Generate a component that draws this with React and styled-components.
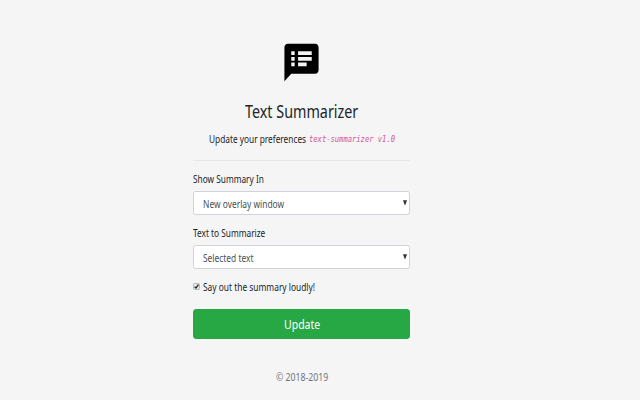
import styled, { createGlobalStyle } from 'styled-components';

const GlobalStyle = createGlobalStyle`
  * {
    box-sizing: border-box;
  }

  body {
    margin: 0;
    background-color: #f5f5f5;
    color: #212529;
    font-family: 'Noto Sans', 'Open Sans', sans-serif;
    font-size: 10px;
  }
`;

const Page = styled.div`
  display: flex;
  justify-content: center;
  height: 400px;
  padding-top: 39.5px;
  padding-right: 36.5px;
  overflow: hidden;
`;

const Form = styled.form`
  display: flex;
  flex-direction: column;
  width: 217px;
`;

/* condensed text, keeps the given width in the layout */
const Text = styled.span`
  display: block;
  flex: none;
  width: ${(props) => props.$width}px;
  white-space: nowrap;
  transform: scaleX(${(props) => props.$scale});
  transform-origin: left;
`;

const Logo = styled.svg`
  display: block;
  width: 41px;
  height: 45px;
  margin: 0 auto;
  fill: #000;
`;

const Title = styled.h1`
  display: flex;
  justify-content: center;
  height: 24px;
  margin: 14.5px 0 0;
  font-size: 18px;
  font-weight: 400;
  line-height: 24px;
`;

const Intro = styled.p`
  display: flex;
  justify-content: center;
  gap: 3px;
  height: 16px;
  margin: 8px 0 0;
  line-height: 16px;
`;

const Code = styled(Text)`
  color: #d8539a;
  font-family: 'DejaVu Sans Mono', monospace;
  font-size: 8px;
  font-style: italic;
  line-height: 17px;
`;

const Divider = styled.hr`
  width: 100%;
  height: 1px;
  margin: 13px 0 10px;
  border: 0;
  background-color: #e6e6e6;
`;

const Label = styled.label`
  height: 16px;
  margin-bottom: 4px;
  line-height: 16px;
`;

const Select = styled.div`
  display: flex;
  align-items: center;
  justify-content: space-between;
  height: 24px;
  margin-bottom: 10px;
  padding: 1px 2px 0 9px;
  border: 1px solid #ced4da;
  border-radius: 2.5px;
  background-color: #fff;
  color: #495057;
`;

const Arrow = styled.svg`
  width: 4px;
  height: 5px;
  margin-bottom: 2px;
  fill: #333;
`;

const CheckRow = styled.label`
  display: flex;
  align-items: center;
  gap: 3px;
  height: 16px;
`;

const Box = styled.svg`
  width: 7px;
  height: 7px;
  margin-top: -2px;
`;

const Button = styled.button`
  display: flex;
  align-items: center;
  justify-content: center;
  width: 100%;
  height: 30px;
  margin: 14px 0 0;
  padding: 0;
  border: 1px solid #28a745;
  border-radius: 3px;
  background-color: #28a745;
  color: #fff;
  font: inherit;
  font-size: 12.5px;
`;

const Footer = styled.footer`
  display: flex;
  justify-content: center;
  margin-top: 30px;
  color: #6c757d;
  line-height: 16px;
`;

function SelectField({ label, labelWidth, labelScale, value, valueWidth, valueScale }) {
  return (
    <>
      <Label>
        <Text $width={labelWidth} $scale={labelScale}>{label}</Text>
      </Label>
      <Select>
        <Text $width={valueWidth} $scale={valueScale}>{value}</Text>
        <Arrow viewBox="0 0 4 5">
          <path d="M0 0.3h4L2.3 5H1.7z" />
        </Arrow>
      </Select>
    </>
  );
}

function App() {
  return (
    <>
      <GlobalStyle />
      <Page>
        <Form>
          <Logo viewBox="0 0 24 24" preserveAspectRatio="none">
            <path d="M20 2H4c-1.1 0-1.99.9-1.99 2L2 22l4-4h14c1.1 0 2-.9 2-2V4c0-1.1-.9-2-2-2zM8 14H6v-2h2v2zm0-3H6V9h2v2zm0-3H6V6h2v2zm7 6h-5v-2h5v2zm3-3h-8V9h8v2zm0-3h-8V6h8v2z" />
          </Logo>
          <Title>
            <Text $width={113} $scale={0.797}>Text Summarizer</Text>
          </Title>
          <Intro>
            <Text $width={97} $scale={0.83}>Update your preferences</Text>
            <Code $width={86} $scale={0.893}>text-summarizer v1.0</Code>
          </Intro>
          <Divider />
          <SelectField
            label="Show Summary In"
            labelWidth={71}
            labelScale={0.83}
            value="New overlay window"
            valueWidth={82}
            valueScale={0.84}
          />
          <SelectField
            label="Text to Summarize"
            labelWidth={73}
            labelScale={0.83}
            value="Selected text"
            valueWidth={51}
            valueScale={0.84}
          />
          <CheckRow>
            <Box viewBox="0 0 7 7">
              <rect x="0.5" y="0.5" width="6" height="6" rx="1" fill="#e8e8e8" stroke="#aaa" strokeWidth="0.8" />
              <path d="M1.7 3.7L3 5L5.4 1.6" fill="none" stroke="#222" strokeWidth="1.3" />
            </Box>
            <Text $width={112} $scale={0.838}>Say out the summary loudly!</Text>
          </CheckRow>
          <Button type="button">
            <Text $width={36} $scale={0.84}>Update</Text>
          </Button>
          <Footer>
            <Text $width={52} $scale={0.87}>© 2018-2019</Text>
          </Footer>
        </Form>
      </Page>
    </>
  );
}

export default App;
